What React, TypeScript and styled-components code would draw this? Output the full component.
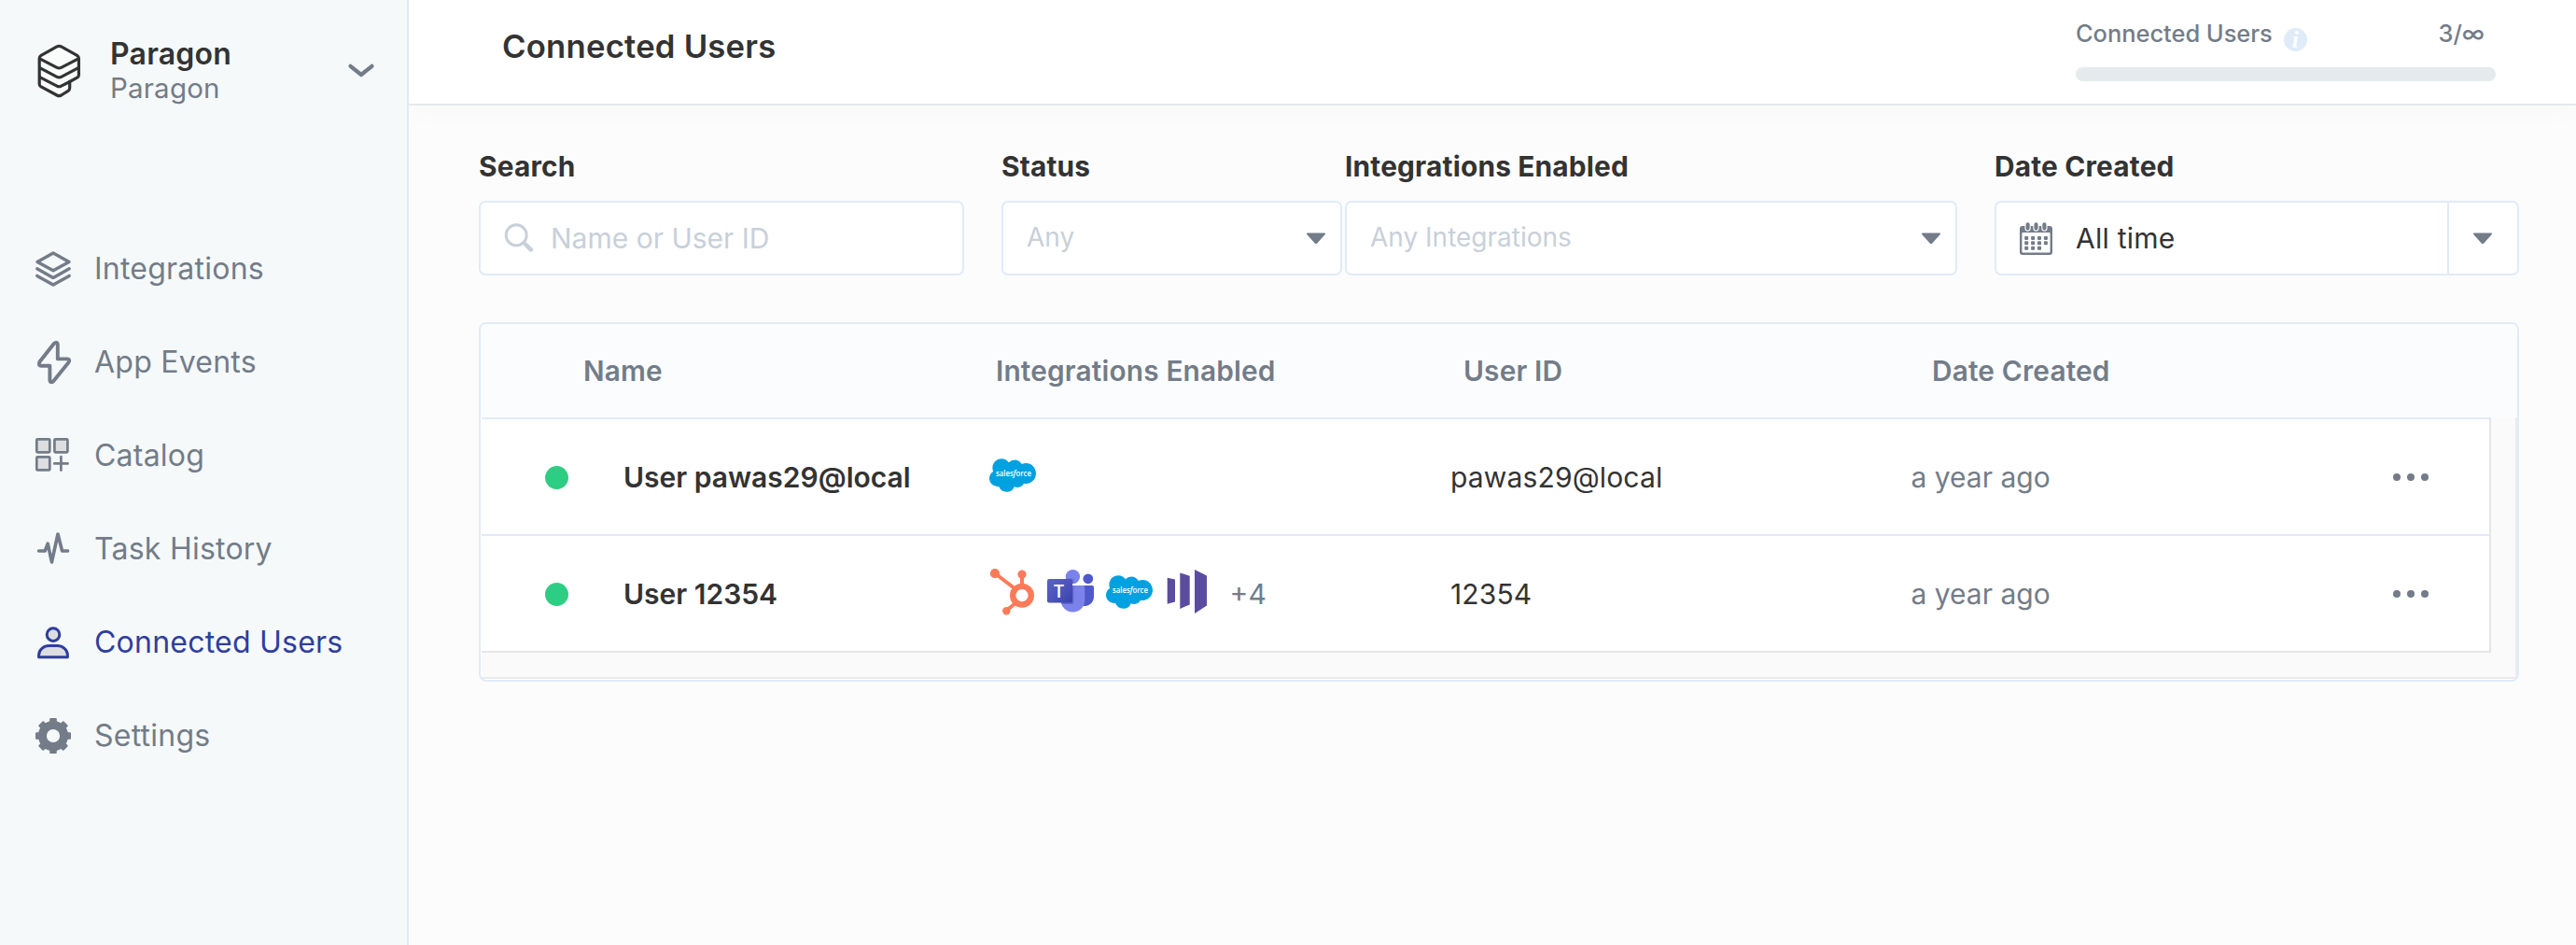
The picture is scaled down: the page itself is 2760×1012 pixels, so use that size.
import React from 'react';
import styled, { createGlobalStyle } from 'styled-components';

const color = {
  ink: '#333333',
  slate: '#737c88',
  muted: '#c8d0d9',
  line: '#e0ebf8',
  grayLine: '#e6e6e6',
  rail: '#f5f9fa',
  page: '#fcfcfc',
  blue: '#2f3e9e',
  green: '#2dce83',
};

const GlobalStyle = createGlobalStyle`
  *, *::before, *::after { box-sizing: border-box; }
  body {
    margin: 0;
    background: ${color.page};
    color: ${color.ink};
    font-family: Inter, "Liberation Sans", sans-serif;
    font-optical-sizing: none;
  }
  svg { display: block; flex: none; }
`;

const Shell = styled.div`
  display: flex;
  width: 2760px;
  height: 1012px;
  overflow: hidden;
`;

const Sidebar = styled.aside`
  position: relative;
  z-index: 1;
  flex: none;
  width: 438px;
  background: ${color.rail};
  border-right: 2px solid ${color.line};
`;

const Workspace = styled.div`
  display: flex;
  height: 238px;
  padding: 38px 33px 0 39px;
  align-items: flex-start;
`;

const LogoSlot = styled.div`
  margin-top: 8px;
`;

const WorkspaceNames = styled.div`
  flex: 1;
  margin-left: 29px;
`;

const WorkspaceName = styled.div`
  font-size: 32px;
  font-weight: 600;
  line-height: 39px;
  letter-spacing: 0.2px;
`;

const ProjectName = styled.div`
  font-size: 29.5px;
  line-height: 35px;
  letter-spacing: 0.2px;
  color: ${color.slate};
`;

const ChevronSlot = styled.div`
  margin-top: 28px;
`;

const NavItem = styled.a<{ $active?: boolean }>`
  display: flex;
  align-items: center;
  gap: 20px;
  height: 100px;
  padding-left: 33px;
  font-size: 32px;
  letter-spacing: 0.23px;
  font-weight: 430;
  color: ${p => (p.$active ? color.blue : color.slate)};
`;

const NavLabel = styled.span`
  line-height: 40px;
  margin-top: -1px;
`;

const Main = styled.main`
  flex: 1;
  min-width: 0;
`;

const Header = styled.header`
  display: flex;
  justify-content: space-between;
  height: 113px;
  padding: 0 86px 0 100px;
  background: #fff;
  border-bottom: 2px solid #e4e9ec;
  box-shadow: 0 16px 24px rgba(30, 80, 90, 0.01);
`;

const Title = styled.h1`
  margin: 0;
  font-size: 34.7px;
  font-weight: 600;
  line-height: 99px;
  letter-spacing: 0.2px;
`;

const Usage = styled.div`
  width: 450px;
  padding-top: 16px;
`;

const UsageRow = styled.div`
  display: flex;
  height: 56px;
  font-size: 25.4px;
  font-weight: 500;
  line-height: 40px;
  color: ${color.slate};
`;

const InfoSlot = styled.span`
  margin: 14px 0 0 12px;
`;

const UsageCount = styled.span`
  margin: 0 12px 0 auto;
`;

const UsageBar = styled.div`
  height: 15px;
  border-radius: 8px;
  background: #e5eaed;
`;

const Content = styled.div`
  padding: 45px 61px 0 75px;
`;

const FilterBar = styled.div`
  display: flex;
`;

const FilterCell = styled.div<{ $width: number; $gap: number }>`
  width: ${p => p.$width}px;
  margin-left: ${p => p.$gap}px;
  flex: none;
`;

const FieldLabel = styled.div`
  height: 57px;
  font-size: 29.8px;
  font-weight: 680;
  line-height: 40px;
  letter-spacing: 0.2px;
`;

const Control = styled.div`
  display: flex;
  align-items: center;
  height: 80px;
  padding-left: 25px;
  border: 2px solid ${color.line};
  border-radius: 7px;
  background: #fff;
`;

const Placeholder = styled.span<{ $size: number; $gap?: number; $lift?: number }>`
  margin-left: ${p => p.$gap ?? 0}px;
  margin-top: -${p => p.$lift ?? 0}px;
  font-size: ${p => p.$size}px;
  color: ${color.muted};
`;

const DateValue = styled.span`
  margin-left: 24px;
  font-size: 30px;
  letter-spacing: 0.25px;
`;

const CaretSlot = styled.span`
  margin: 1px 15px 0 auto;
`;

const CaretButton = styled.span`
  display: flex;
  align-items: center;
  justify-content: center;
  align-self: stretch;
  width: 75px;
  margin-left: auto;
  border-left: 2px solid ${color.line};
  padding: 1px 1px 0 0;
`;

const Table = styled.section`
  margin-top: 50px;
  height: 385px;
  border: 2px solid ${color.line};
  border-radius: 8px;
  background: #fff;
  overflow: hidden;
`;

const HeadRow = styled.div`
  display: grid;
  grid-template-columns: 110px 442px 501px 502px 1fr;
  height: 100px;
  background: #fbfcfe;
  font-size: 29.8px;
  font-weight: 580;
  line-height: 100px;
  letter-spacing: 0.17px;
  color: ${color.slate};
`;

const Scroller = styled.div`
  margin-left: 1px;
  height: 280px;
  padding: 0 26px 26px 0;
  background: #fafafa;
  border-right: 2px solid #ebecec;
  border-bottom: 2px solid #ebebeb;
`;

const Viewport = styled.div`
  height: 252px;
  border-right: 2px solid ${color.grayLine};
  border-bottom: 2px solid ${color.grayLine};
  background: #fff;
`;

const BodyRow = styled.div`
  display: grid;
  grid-template-columns: 152px 392px 494px 493px 517px 1fr;
  align-items: center;
  height: 125px;
  border-top: 2px solid ${color.line};
  font-size: 30px;
`;

const StatusDot = styled.span`
  width: 25px;
  height: 25px;
  margin: 1px 0 0 68px;
  border-radius: 50%;
  background: ${color.green};
`;

const UserName = styled.span`
  font-weight: 600;
`;

const Apps = styled.span`
  display: flex;
  align-items: center;
  gap: 12.4px;
  margin-top: -4px;
`;

const More = styled.span`
  margin: 4px 0 0 8px;
  color: ${color.slate};
`;

const UserId = styled.span`
  letter-spacing: 0.15px;
`;

const Age = styled.span`
  padding-left: 0.5px;
  color: ${color.slate};
`;

const RowMenu = styled.span`
  display: flex;
  gap: 7px;
`;

const MenuDot = styled.i`
  width: 8px;
  height: 8px;
  border-radius: 50%;
  background: ${color.slate};
`;

const Logo = () => (
  <svg width="50" height="60" viewBox="0 0 50 60" fill="none" stroke={color.ink} strokeWidth="3.2" strokeLinejoin="round" strokeLinecap="round">
    <path fill="#fafbfb" d="M22 3.9Q24.3 2.8 26.6 3.9L43.6 13.3Q45.4 14.4 45.4 16.5V34.3Q45.4 36 44 36.8L35.7 41.5V48.3Q35.7 50.3 34 51.3L26.6 56Q24.3 57.3 22 56L4.6 46.6Q3.2 45.8 3.2 44.2V16.5Q3.2 14.4 5 13.3Z" />
    <path d="M3.6 16.8L22 26.4Q24.3 27.6 26.6 26.4L45 16.8M3.6 26.6L22 36.3Q24.3 37.5 26.6 36.3L45 26.6M3.6 36.6L22 46.1Q24.3 47.4 26.6 46.1L35.7 41.5" />
  </svg>
);

const Chevron = () => (
  <svg width="32" height="20" viewBox="0 0 32 20" fill="none" stroke={color.slate} strokeWidth="4.2" strokeLinecap="round" strokeLinejoin="round">
    <path d="M4.5 4.8L16 14L27.5 4.8" />
  </svg>
);

const NavSvg = ({ children }: { children: React.ReactNode }) => (
  <svg width="48" height="48" viewBox="0 0 48 48" fill="none" stroke="currentColor" strokeLinecap="round" strokeLinejoin="round">
    {children}
  </svg>
);

const LayersIcon = () => (
  <NavSvg>
    <path strokeWidth="3.4" d="M24 7L41 16.5L24 25.8L7 16.5ZM6.8 23.8L24 33.4L41.2 23.8M6.8 31.4L24 41L41.2 31.4" />
  </NavSvg>
);

const BoltIcon = () => (
  <NavSvg>
    <path strokeWidth="3.9" d="M28.8 5.2C28.8 2.5 26.3 2.2 24.8 4L9.6 23.2C8 25.3 8.8 27.7 11.2 27.7H20.4V43C20.4 45.7 23 45.8 24.4 44.1L40.4 24.2C42 22.2 41.4 20.4 39 20.4H28.8Z" />
  </NavSvg>
);

const CatalogIcon = () => (
  <NavSvg>
    <g strokeWidth="2.7" fill="#dcdee0">
      <rect x="6.3" y="6.3" width="14" height="14" rx="1" />
      <rect x="25.4" y="6.3" width="14" height="14" rx="1" />
      <rect x="6.3" y="25.4" width="14" height="14" rx="1" />
    </g>
    <path strokeWidth="2.7" d="M32.4 25.2V39.6M25.2 32.4H39.6" />
  </NavSvg>
);

const PulseIcon = () => (
  <NavSvg>
    <path strokeWidth="3.6" d="M8.6 26H15.2L18.2 18.2L22.4 38L29 8L33.6 26H39.6" />
  </NavSvg>
);

const UserIcon = () => (
  <NavSvg>
    <circle cx="24" cy="15.6" r="6.8" strokeWidth="3" fill="#dcdee0" />
    <path strokeWidth="3" fill="#dcdee0" d="M8.6 39.7V37.6C8.6 31.6 14 27.6 19.6 27.6H28.4C34 27.6 39.4 31.6 39.4 37.6V39.7Z" />
  </NavSvg>
);

const GearIcon = () => (
  <NavSvg>
    <circle cx="24" cy="24" r="11.6" strokeWidth="9" />
    <g fill="currentColor" stroke="none">
      {[0, 45, 90, 135, 180, 225, 270, 315].map(a => (
        <rect key={a} x="20.2" y="5" width="7.6" height="7" rx="1" transform={`rotate(${a} 24 24)`} />
      ))}
    </g>
  </NavSvg>
);

const InfoIcon = () => (
  <svg width="25" height="25" viewBox="0 0 25 25">
    <circle cx="12.5" cy="12.5" r="12.5" fill="#e0ebf8" />
    <text x="12.3" y="20.6" textAnchor="middle" fill="#fff" fontFamily="Liberation Serif, serif" fontStyle="italic" fontWeight="700" fontSize="25">i</text>
  </svg>
);

const SearchIcon = () => (
  <svg width="32" height="32" viewBox="0 0 32 32" fill="none" stroke={color.muted} strokeLinecap="round">
    <circle cx="13.2" cy="12.8" r="11" strokeWidth="3" />
    <path strokeWidth="4.6" d="M23.2 22.9L28.8 28.4" />
    <path strokeWidth="3" d="M21 20.8L23 23" />
  </svg>
);

const CalendarIcon = () => (
  <svg width="36" height="36" viewBox="0 0 36 36">
    <path fill={color.slate} d="M3 5H32Q35 5 35 8V33Q35 36 32 36H3Q0 36 0 33V8Q0 5 3 5Z" />
    <rect x="2.4" y="12" width="30.2" height="21.6" rx="1" fill="#fff" />
    {[8.6, 17.5, 26.4].map(x => (
      <rect key={x} x={x - 2.6} y="0.6" width="5.2" height="9.6" rx="2.6" fill={color.slate} stroke="#fff" strokeWidth="1.1" />
    ))}
    <g fill={color.slate}>
      {[0, 1, 2, 3, 4, 5, 6, 7, 8, 9, 10].map(i => (
        <rect key={i} x={5.2 + (i % 4) * 6.9} y={15.9 + Math.floor(i / 4) * 5.4} width="4" height="4" rx="0.8" />
      ))}
    </g>
  </svg>
);

const Caret = () => (
  <svg width="22" height="13" viewBox="0 0 22 13" fill={color.slate} stroke={color.slate} strokeWidth="1.6" strokeLinejoin="round">
    <path d="M1.8 1.4H20.2L11.9 10.8Q11 11.6 10.1 10.8Z" />
  </svg>
);

const Salesforce = () => (
  <svg width="50" height="50" viewBox="0 0 50 50">
    <path
      transform="translate(0 -0.2) scale(2.0833 2.1)"
      fill="#00a1e0"
      d="M10.006 5.415a4.195 4.195 0 013.045-1.306c1.56 0 2.954.9 3.69 2.205.63-.3 1.35-.45 2.1-.45 2.85 0 5.159 2.34 5.159 5.22s-2.31 5.22-5.176 5.22c-.345 0-.69-.044-1.02-.104a3.75 3.75 0 01-3.3 1.95c-.6 0-1.155-.15-1.65-.375A4.314 4.314 0 018.88 20.4a4.302 4.302 0 01-4.05-2.82c-.27.062-.54.076-.825.076-2.204 0-4.005-1.8-4.005-4.05 0-1.5.811-2.805 2.01-3.51-.255-.57-.39-1.2-.39-1.846 0-2.58 2.1-4.65 4.65-4.65 1.53 0 2.85.705 3.72 1.8"
    />
    <text x="7" y="25.8" fill="#fff" fontFamily="Open Sans, sans-serif" fontWeight="600" fontSize="8.8" textLength="38" lengthAdjust="spacingAndGlyphs">
      sales<tspan fontStyle="italic">f</tspan>orce
    </text>
  </svg>
);

const Hubspot = () => (
  <svg width="50" height="50" viewBox="0 0 50 50" fill="none" stroke="#ff7a59">
    <circle cx="35" cy="28.7" r="9.8" strokeWidth="6.4" />
    <path strokeWidth="4" d="M35 18V6M6 5L27 21M28 37L18 45" />
    <g fill="#ff7a59" stroke="none">
      <circle cx="35" cy="6" r="4.6" />
      <circle cx="6" cy="5.2" r="5.1" />
      <circle cx="18.3" cy="45.2" r="4.2" />
    </g>
  </svg>
);

const Teams = () => (
  <svg width="50" height="50" viewBox="0 0 50 50">
    <defs>
      <linearGradient id="tile" x1="0" y1="0" x2="1" y2="1">
        <stop offset="0" stopColor="#5a62c3" />
        <stop offset="0.5" stopColor="#4d55bd" />
        <stop offset="1" stopColor="#3940ab" />
      </linearGradient>
      <clipPath id="torso">
        <path d="M14.7 18H40V33.8A12.6 12.6 0 0 1 14.7 33.8Z" />
      </clipPath>
    </defs>
    <path fill="#5059c9" d="M38 18H48Q50 18 50 20V30A9.8 9.8 0 0 1 38 39.7Z" />
    <circle cx="43.8" cy="10.8" r="5.4" fill="#5059c9" />
    <circle cx="27.4" cy="8.6" r="7.7" fill="#7b83eb" />
    <path fill="#7b83eb" d="M14.7 18H38.5Q40.3 18 40.3 20V33.8A12.8 12.8 0 0 1 14.7 33.8Z" />
    <g clipPath="url(#torso)">
      <path fill="#2f379b" opacity="0.35" d="M12 14H26.5Q28.4 14 28.4 16V36Q28.4 38 26.5 38H12Z" />
    </g>
    <path fill="#3e4799" opacity="0.35" d="M19.8 10.4H26.5Q28 10.6 28.3 12V16.2H23A7.7 7.7 0 0 1 19.8 10.4Z" />
    <rect x="0" y="11" width="27" height="25.4" rx="2" fill="url(#tile)" />
    <text x="12.5" y="30.6" textAnchor="middle" fill="#fff" fontFamily="Open Sans, sans-serif" fontWeight="600" fontSize="19.5">T</text>
  </svg>
);

const Marketo = () => (
  <svg width="50" height="50" viewBox="0 0 50 50" fill="#5c4c9f">
    <path d="M3.7 9.7L12 11.4V35.4L3.7 37.7ZM17.3 4.4L27.7 7.7V38.4L17.3 43ZM33 1L46 7.4V39.6L33 48Z" />
  </svg>
);

type IconType = () => React.ReactElement;

const navigation: { label: string; Icon: IconType; active?: boolean }[] = [
  { label: 'Integrations', Icon: LayersIcon },
  { label: 'App Events', Icon: BoltIcon },
  { label: 'Catalog', Icon: CatalogIcon },
  { label: 'Task History', Icon: PulseIcon },
  { label: 'Connected Users', Icon: UserIcon, active: true },
  { label: 'Settings', Icon: GearIcon },
];

const users: { name: string; apps: IconType[]; more?: string; id: string; age: string }[] = [
  { name: 'User pawas29@local', apps: [Salesforce], id: 'pawas29@local', age: 'a year ago' },
  { name: 'User 12354', apps: [Hubspot, Teams, Salesforce, Marketo], more: '+4', id: '12354', age: 'a year ago' },
];

export default function App() {
  return (
    <Shell>
      <GlobalStyle />
      <Sidebar>
        <Workspace>
          <LogoSlot><Logo /></LogoSlot>
          <WorkspaceNames>
            <WorkspaceName>Paragon</WorkspaceName>
            <ProjectName>Paragon</ProjectName>
          </WorkspaceNames>
          <ChevronSlot><Chevron /></ChevronSlot>
        </Workspace>
        <nav>
          {navigation.map(({ label, Icon, active }) => (
            <NavItem key={label} $active={active}>
              <Icon />
              <NavLabel>{label}</NavLabel>
            </NavItem>
          ))}
        </nav>
      </Sidebar>
      <Main>
        <Header>
          <Title>Connected Users</Title>
          <Usage>
            <UsageRow>
              <span>Connected Users</span>
              <InfoSlot><InfoIcon /></InfoSlot>
              <UsageCount>3/∞</UsageCount>
            </UsageRow>
            <UsageBar />
          </Usage>
        </Header>
        <Content>
          <FilterBar>
            <FilterCell $width={520} $gap={0}>
              <FieldLabel>Search</FieldLabel>
              <Control>
                <SearchIcon />
                <Placeholder $size={30} $gap={18}>Name or User ID</Placeholder>
              </Control>
            </FilterCell>
            <FilterCell $width={365} $gap={40}>
              <FieldLabel>Status</FieldLabel>
              <Control>
                <Placeholder $size={28} $lift={2}>Any</Placeholder>
                <CaretSlot><Caret /></CaretSlot>
              </Control>
            </FilterCell>
            <FilterCell $width={656} $gap={3}>
              <FieldLabel>Integrations Enabled</FieldLabel>
              <Control>
                <Placeholder $size={28} $lift={2}>Any Integrations</Placeholder>
                <CaretSlot><Caret /></CaretSlot>
              </Control>
            </FilterCell>
            <FilterCell $width={562} $gap={40}>
              <FieldLabel>Date Created</FieldLabel>
              <Control>
                <CalendarIcon />
                <DateValue>All time</DateValue>
                <CaretButton><Caret /></CaretButton>
              </Control>
            </FilterCell>
          </FilterBar>
          <Table>
            <HeadRow>
              <span />
              <span>Name</span>
              <span>Integrations Enabled</span>
              <span>User ID</span>
              <span>Date Created</span>
            </HeadRow>
            <Scroller>
              <Viewport>
                {users.map(user => (
                  <BodyRow key={user.id}>
                    <StatusDot />
                    <UserName>{user.name}</UserName>
                    <Apps>
                      {user.apps.map((AppLogo, i) => <AppLogo key={i} />)}
                      {user.more && <More>{user.more}</More>}
                    </Apps>
                    <UserId>{user.id}</UserId>
                    <Age>{user.age}</Age>
                    <RowMenu><MenuDot /><MenuDot /><MenuDot /></RowMenu>
                  </BodyRow>
                ))}
              </Viewport>
            </Scroller>
          </Table>
        </Content>
      </Main>
    </Shell>
  );
}
